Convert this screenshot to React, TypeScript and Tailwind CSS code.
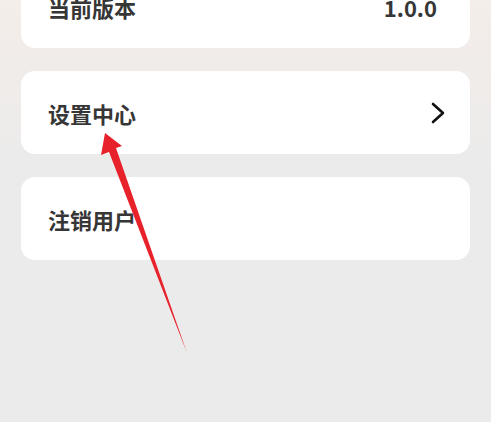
export default function App() {
  const rows = [
    { label: "当前版本", value: "1.0.0", arrow: false },
    { label: "设置中心", value: "", arrow: true },
    { label: "注销用户", value: "", arrow: false },
  ];

  return (
    <div
      className="relative h-[422px] w-[491px] overflow-hidden bg-linear-to-b from-[#f4ede9] via-[#ebebeb] via-40% to-[#ebebeb] px-[21px]"
      style={{ fontFamily: '"Noto Sans CJK SC", "Noto Sans", sans-serif' }}
    >
      <div className="mt-[-35px] flex flex-col gap-[23px]">
        {rows.map((row) => (
          <div
            key={row.label}
            className="flex h-[83px] items-center justify-between rounded-[14px] bg-white pl-[27px] pr-[24px]"
          >
            <span className="text-[22px] font-semibold leading-none text-[#363636]">
              {row.label}
            </span>
            {row.value && (
              <span className="mr-[9px] text-[22px] font-semibold leading-none text-[#363636]">
                {row.value}
              </span>
            )}
            {row.arrow && (
              <svg width="16" height="22" viewBox="0 0 16 22" fill="none">
                <path
                  d="M3 2 L13 11 L3 20"
                  stroke="#111"
                  strokeWidth="2.6"
                  strokeLinecap="round"
                  strokeLinejoin="round"
                />
              </svg>
            )}
          </div>
        ))}
      </div>

      {/* red annotation arrow */}
      <svg
        className="pointer-events-none absolute left-0 top-0"
        width="491"
        height="422"
        viewBox="0 0 491 422"
      >
        <polygon
          points="105,133 122,146 116,148 187,353 109,152 101,155"
          fill="#e8222b"
        />
      </svg>
    </div>
  );
}
